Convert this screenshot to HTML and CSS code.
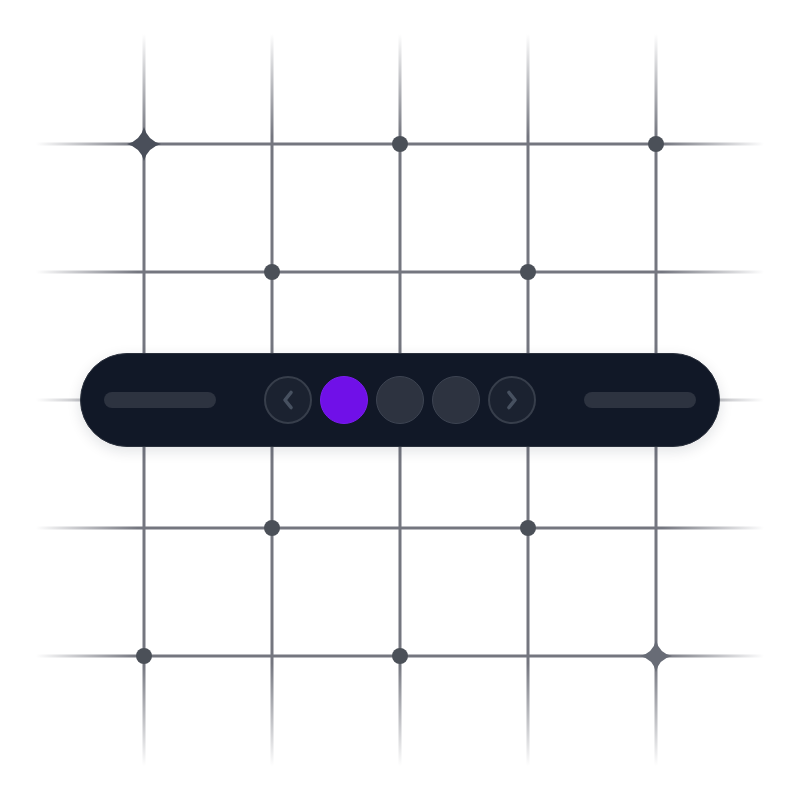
FILE: index.html
```
<!DOCTYPE html>
<html>
<head>
<meta charset="utf-8">
<link rel="stylesheet" href="styles.css">
</head>
<body>
<div class="stage">
  <svg class="grid" width="800" height="800" viewBox="0 0 800 800">
    <defs>
      <linearGradient id="gh" x1="36" y1="0" x2="764" y2="0" gradientUnits="userSpaceOnUse">
        <stop offset="0" stop-color="#74767f" stop-opacity="0"/>
        <stop offset="0.14" stop-color="#74767f" stop-opacity="1"/>
        <stop offset="0.86" stop-color="#74767f" stop-opacity="1"/>
        <stop offset="1" stop-color="#74767f" stop-opacity="0"/>
      </linearGradient>
      <linearGradient id="gv" x1="0" y1="34" x2="0" y2="766" gradientUnits="userSpaceOnUse">
        <stop offset="0" stop-color="#74767f" stop-opacity="0"/>
        <stop offset="0.14" stop-color="#74767f" stop-opacity="1"/>
        <stop offset="0.86" stop-color="#74767f" stop-opacity="1"/>
        <stop offset="1" stop-color="#74767f" stop-opacity="0"/>
      </linearGradient>
    </defs>
    <g stroke="url(#gh)" stroke-width="3">
      <line x1="36" y1="144" x2="764" y2="144"/>
      <line x1="36" y1="272" x2="764" y2="272"/>
      <line x1="36" y1="400" x2="764" y2="400"/>
      <line x1="36" y1="528" x2="764" y2="528"/>
      <line x1="36" y1="656" x2="764" y2="656"/>
    </g>
    <g stroke="url(#gv)" stroke-width="3">
      <line x1="144" y1="34" x2="144" y2="766"/>
      <line x1="272" y1="34" x2="272" y2="766"/>
      <line x1="400" y1="34" x2="400" y2="766"/>
      <line x1="528" y1="34" x2="528" y2="766"/>
      <line x1="656" y1="34" x2="656" y2="766"/>
    </g>
    <g fill="#4b5058">
      <circle cx="400" cy="144" r="8"/>
      <circle cx="656" cy="144" r="8"/>
      <circle cx="272" cy="272" r="8"/>
      <circle cx="528" cy="272" r="8"/>
      <circle cx="272" cy="528" r="8"/>
      <circle cx="528" cy="528" r="8"/>
      <circle cx="144" cy="656" r="8"/>
      <circle cx="400" cy="656" r="8"/>
    </g>
    <path fill="#4a4f5a" transform="translate(144 144)" d="M0,-17 Q3.5,-3.5 17,0 Q3.5,3.5 0,17 Q-3.5,3.5 -17,0 Q-3.5,-3.5 0,-17Z"/>
    <path fill="#686c76" transform="translate(656 656)" d="M0,-16 Q3,-3 16,0 Q3,3 0,16 Q-3,3 -16,0 Q-3,-3 0,-16Z"/>
  </svg>
  <div class="pill">
    <div class="bar"></div>
    <div class="controls">
      <button class="nav" aria-label="Previous">
        <svg width="16" height="24" viewBox="0 0 16 24"><path d="M11 4.5 L5 12 L11 19.5" fill="none" stroke="#475160" stroke-width="3.6" stroke-linecap="round" stroke-linejoin="round"/></svg>
      </button>
      <span class="dot active"></span>
      <span class="dot"></span>
      <span class="dot"></span>
      <button class="nav" aria-label="Next">
        <svg width="16" height="24" viewBox="0 0 16 24"><path d="M5 4.5 L11 12 L5 19.5" fill="none" stroke="#475160" stroke-width="3.6" stroke-linecap="round" stroke-linejoin="round"/></svg>
      </button>
    </div>
    <div class="bar"></div>
  </div>
</div>
</body>
</html>
```

FILE: styles.css
```
html, body {
  margin: 0;
  padding: 0;
  background: #ffffff;
}
.stage {
  width: 800px;
  height: 800px;
  display: grid;
  place-items: center;
}
.grid {
  grid-area: 1 / 1;
  display: block;
}
.pill {
  grid-area: 1 / 1;
  width: 640px;
  height: 94px;
  box-sizing: border-box;
  border-radius: 47px;
  background: #111827;
  border: 1px solid #2a303c;
  box-shadow: 0 4px 14px rgba(17, 24, 39, 0.12);
  padding: 0 23px;
  display: flex;
  align-items: center;
  justify-content: space-between;
  position: relative;
}
.bar {
  width: 112px;
  height: 16px;
  border-radius: 8px;
  background: #2d3340;
}
.controls {
  display: flex;
  gap: 8px;
  align-items: center;
}
.nav, .dot {
  width: 48px;
  height: 48px;
  border-radius: 50%;
  box-sizing: border-box;
  padding: 0;
  margin: 0;
  display: flex;
  align-items: center;
  justify-content: center;
}
.nav {
  background: #1b2230;
  border: 2px solid #373e4b;
}
.dot {
  background: #2d3340;
  border: 1.5px solid #3d4452;
}
.dot.active {
  background: #7010e8;
  border-color: #7a1cf0;
}
```
